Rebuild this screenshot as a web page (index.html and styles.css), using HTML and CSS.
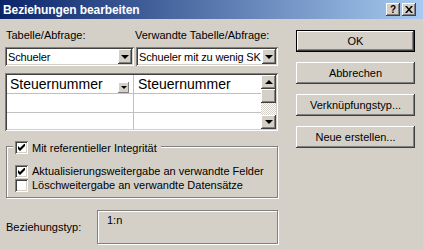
FILE: index.html
```html
<!DOCTYPE html>
<html lang="de">
<head>
<meta charset="utf-8">
<title>Beziehungen bearbeiten</title>
<link rel="stylesheet" href="styles.css">
</head>
<body>
<div class="titlebar">
  <span class="title">Beziehungen bearbeiten</span>
  <div class="cbtns">
    <span class="cbtn help">?</span>
    <span class="cbtn close"><svg width="8" height="7" viewBox="0 0 8 7"><path d="M0 0h2l2 2.5 2-2.5h2l-3 3.5 3 3.5h-2l-2-2.5-2 2.5h-2l3-3.5z" fill="#000"/></svg></span>
  </div>
</div>
<div class="main">
  <div class="left">
    <div class="labels">
      <span class="lbl lbl1">Tabelle/Abfrage:</span>
      <span class="lbl">Verwandte Tabelle/Abfrage:</span>
    </div>
    <div class="combos">
      <div class="combo c1"><span class="ctext">Schueler</span><span class="arrowbtn"><span class="tri-down"></span></span></div>
      <div class="combo c2"><span class="ctext">Schueler mit zu wenig SK</span><span class="arrowbtn"><span class="tri-down"></span></span></div>
    </div>
    <div class="grid">
      <div class="table">
        <div class="row">
          <div class="cell col1"><span>Steuernummer</span><span class="minibtn"><span class="tri-small"></span></span></div>
          <div class="cell col2"><span>Steuernummer</span></div>
        </div>
        <div class="row">
          <div class="cell col1"></div>
          <div class="cell col2"></div>
        </div>
        <div class="row">
          <div class="cell col1"></div>
          <div class="cell col2"></div>
        </div>
      </div>
      <div class="vscroll">
        <span class="sbtn"><span class="tri-up"></span></span>
        <span class="thumb"></span>
        <span class="track"></span>
        <span class="sbtn"><span class="tri-down"></span></span>
      </div>
    </div>
    <div class="group">
      <div class="legend">
        <span class="chk on"><svg width="7" height="7" viewBox="0 0 7 7"><path d="M0 2v3l2 2 5-5v-3l-5 5z" fill="#000"/></svg></span>
        <span>Mit referentieller Integrität</span>
      </div>
      <div class="chkrow">
        <span class="chk on"><svg width="7" height="7" viewBox="0 0 7 7"><path d="M0 2v3l2 2 5-5v-3l-5 5z" fill="#000"/></svg></span>
        <span>Aktualisierungsweitergabe an verwandte Felder</span>
      </div>
      <div class="chkrow">
        <span class="chk"></span>
        <span>Löschweitergabe an verwandte Datensätze</span>
      </div>
    </div>
    <div class="reltype">
      <span class="rlabel">Beziehungstyp:</span>
      <div class="rbox">1:n</div>
    </div>
  </div>
  <div class="right">
    <div class="btn default">OK</div>
    <div class="btn">Abbrechen</div>
    <div class="btn">Verknüpfungstyp...</div>
    <div class="btn">Neue erstellen...</div>
  </div>
</div>
</body>
</html>
```
FILE: styles.css
```css
* { box-sizing: border-box; }
html, body { margin: 0; padding: 0; }
body {
  width: 423px;
  height: 250px;
  overflow: hidden;
  background: #d4d0c8;
  font-family: "Liberation Sans", Arial, sans-serif;
  font-size: 11px;
  color: #000;
}
.titlebar {
  height: 19px;
  display: flex;
  align-items: center;
  padding: 0 7px 0 3px;
  background: linear-gradient(to right, #0a246a, #a6caf0);
}
.title {
  flex: 1;
  color: #fff;
  font-weight: bold;
  font-size: 12px;
  letter-spacing: -0.1px;
}
.cbtns { display: flex; gap: 1px; }
.cbtn {
  width: 14px;
  height: 13px;
  display: flex;
  align-items: center;
  justify-content: center;
  background: #d4d0c8;
  box-shadow: inset -1px -1px 0 #404040, inset 1px 1px 0 #fff, inset -2px -2px 0 #808080;
  font-weight: bold;
  font-size: 10px;
  line-height: 1;
}
.cbtn.close { margin-left: 1px; }
.main {
  display: flex;
  padding-left: 5px;
  gap: 18px;
}
.left {
  width: 273px;
  display: flex;
  flex-direction: column;
  padding-top: 10px;
}
.labels { display: flex; height: 13px; line-height: 13px; }
.lbl1 { width: 130px; padding-left: 1px; }
.combos { display: flex; gap: 2px; margin-top: 5px; height: 19px; }
.combo {
  display: flex;
  align-items: center;
  background: #fff;
  box-shadow: inset 1px 1px 0 #808080, inset -1px -1px 0 #fff, inset 2px 2px 0 #404040, inset -2px -2px 0 #d4d0c8;
  padding: 2px;
}
.c1 { width: 129px; }
.c2 { width: 142px; }
.ctext {
  flex: 1;
  padding-left: 1px;
  white-space: nowrap;
  overflow: hidden;
  letter-spacing: -0.15px;
}
.arrowbtn {
  width: 14px;
  height: 15px;
  flex: none;
  display: flex;
  align-items: center;
  justify-content: center;
  background: #d4d0c8;
  box-shadow: inset -1px -1px 0 #404040, inset 1px 1px 0 #fff, inset -2px -2px 0 #808080;
}
.tri-down {
  width: 0; height: 0;
  border-left: 4px solid transparent;
  border-right: 4px solid transparent;
  border-top: 4px solid #000;
}
.tri-up {
  width: 0; height: 0;
  border-left: 4px solid transparent;
  border-right: 4px solid transparent;
  border-bottom: 4px solid #000;
}
.tri-small {
  width: 0; height: 0;
  border-left: 3px solid transparent;
  border-right: 3px solid transparent;
  border-top: 3px solid #000;
}
.grid {
  margin-top: 7px;
  height: 58px;
  display: flex;
  padding: 2px;
  background: #fff;
  box-shadow: inset 1px 1px 0 #808080, inset -1px -1px 0 #fff, inset 2px 2px 0 #404040, inset -2px -2px 0 #d4d0c8;
}
.table { flex: 1; overflow: hidden; }
.row { display: flex; height: 19px; border-bottom: 1px solid #c0c0c0; }
.cell {
  display: flex;
  align-items: center;
  font-size: 14px;
  white-space: nowrap;
  overflow: hidden;
}
.col1 { width: 127px; border-right: 1px solid #c0c0c0; padding: 0 4px 0 3px; }
.col2 { flex: 1; padding-left: 4px; }
.minibtn {
  margin-left: auto;
  align-self: flex-end;
  width: 11px;
  height: 11px;
  display: flex;
  align-items: center;
  justify-content: center;
  background: #d4d0c8;
  box-shadow: inset -1px -1px 0 #808080, inset 1px 1px 0 #fff;
}
.vscroll { width: 15px; display: flex; flex-direction: column; }
.sbtn, .thumb {
  height: 14px;
  display: flex;
  align-items: center;
  justify-content: center;
  background: #d4d0c8;
  box-shadow: inset -1px -1px 0 #404040, inset 1px 1px 0 #fff, inset -2px -2px 0 #808080;
}
.track {
  flex: 1;
  background: repeating-conic-gradient(#fff 0 25%, #d4d0c8 0 50%) 0 0 / 2px 2px;
}
.group {
  position: relative;
  margin-top: 15px;
  margin-left: 1px;
  width: 272px;
  height: 52px;
  border: 1px solid #808080;
  box-shadow: 1px 1px 0 #fff, inset 1px 1px 0 #fff;
  padding: 17px 8px 0 8px;
}
.legend {
  position: absolute;
  top: -6px;
  left: 6px;
  display: flex;
  align-items: center;
  gap: 4px;
  padding: 0 4px 0 2px;
  height: 13px;
  background: #d4d0c8;
}
.chkrow { display: flex; align-items: center; gap: 4px; height: 14px; }
.chk {
  width: 13px;
  height: 13px;
  flex: none;
  display: flex;
  align-items: center;
  justify-content: center;
  background: #fff;
  box-shadow: inset 1px 1px 0 #808080, inset -1px -1px 0 #fff, inset 2px 2px 0 #404040, inset -2px -2px 0 #d4d0c8;
}
.reltype { display: flex; align-items: center; margin-top: 12px; }
.rlabel { width: 93px; padding-left: 1px; }
.rbox {
  flex: none;
  width: 181px;
  height: 34px;
  border: 1px solid #808080;
  box-shadow: 1px 1px 0 #fff, inset 1px 1px 0 #fff;
  padding: 3px 9px;
}
.right {
  width: 119px;
  padding-top: 11px;
  display: flex;
  flex-direction: column;
  gap: 10px;
}
.btn {
  height: 22px;
  display: flex;
  align-items: center;
  justify-content: center;
  background: #d4d0c8;
  box-shadow: inset -1px -1px 0 #404040, inset 1px 1px 0 #fff, inset -2px -2px 0 #808080;
}
.btn.default {
  border: 1px solid #000;
}
```
